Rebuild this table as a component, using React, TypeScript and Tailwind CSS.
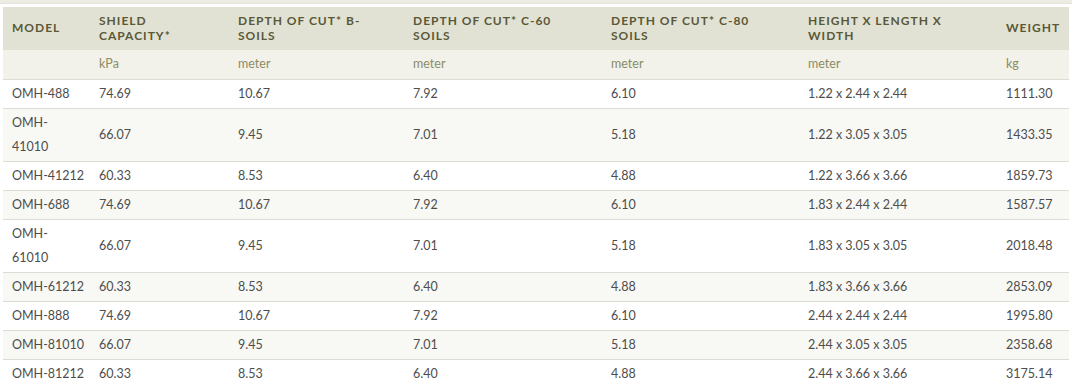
import React from "react";

const rows: { m: string[]; v: string[] }[] = [
  { m: ["OMH-488"], v: ["74.69", "10.67", "7.92", "6.10", "1.22 x 2.44 x 2.44", "1111.30"] },
  { m: ["OMH-", "41010"], v: ["66.07", "9.45", "7.01", "5.18", "1.22 x 3.05 x 3.05", "1433.35"] },
  { m: ["OMH-41212"], v: ["60.33", "8.53", "6.40", "4.88", "1.22 x 3.66 x 3.66", "1859.73"] },
  { m: ["OMH-688"], v: ["74.69", "10.67", "7.92", "6.10", "1.83 x 2.44 x 2.44", "1587.57"] },
  { m: ["OMH-", "61010"], v: ["66.07", "9.45", "7.01", "5.18", "1.83 x 3.05 x 3.05", "2018.48"] },
  { m: ["OMH-61212"], v: ["60.33", "8.53", "6.40", "4.88", "1.83 x 3.66 x 3.66", "2853.09"] },
  { m: ["OMH-888"], v: ["74.69", "10.67", "7.92", "6.10", "2.44 x 2.44 x 2.44", "1995.80"] },
  { m: ["OMH-81010"], v: ["66.07", "9.45", "7.01", "5.18", "2.44 x 3.05 x 3.05", "2358.68"] },
  { m: ["OMH-81212"], v: ["60.33", "8.53", "6.40", "4.88", "2.44 x 3.66 x 3.66", "3175.14"] },
];

const headers: string[][] = [
  ["MODEL"],
  ["SHIELD", "CAPACITY*"],
  ["DEPTH OF CUT* B-", "SOILS"],
  ["DEPTH OF CUT* C-60", "SOILS"],
  ["DEPTH OF CUT* C-80", "SOILS"],
  ["HEIGHT X LENGTH X", "WIDTH"],
  ["WEIGHT"],
];

const units = ["", "kPa", "meter", "meter", "meter", "meter", "kg"];

export default function App() {
  return (
    <div className="w-[1072px] h-[387px] overflow-hidden bg-white" style={{ fontFamily: "Lato, 'Liberation Sans', sans-serif" }}>
      <div className="h-[4px] bg-[#ececE5] border-b border-[#e4e4dc]" />
      <div className="h-[3px] bg-white" />
      <table className="ml-[3px] w-[1066px] table-fixed border-collapse">
        <colgroup>
          <col className="w-[87px]" />
          <col className="w-[139px]" />
          <col className="w-[175px]" />
          <col className="w-[198px]" />
          <col className="w-[197px]" />
          <col className="w-[198px]" />
          <col className="w-[72px]" />
        </colgroup>
        <thead>
          <tr className="h-[43px] bg-[#e2e2d4]">
            {headers.map((h, i) => (
              <th
                key={i}
                className="pl-[9px] pr-0 py-0 text-left align-middle text-[12px] font-bold leading-[14.5px] tracking-[1px] text-[#595938] whitespace-nowrap"
              >
                {h.map((l, j) => (
                  <div key={j}>{l}</div>
                ))}
              </th>
            ))}
          </tr>
          <tr className="h-[29px] bg-[#f2f2eb] border-b border-[#dcdcd3]">
            {units.map((u, i) => (
              <td key={i} className="pl-[9px] py-[2px] text-[12.5px] leading-[24px] text-[#8c8c64] align-middle">
                {u}
              </td>
            ))}
          </tr>
        </thead>
        <tbody>
          {rows.map((r, i) => (
            <tr key={i} className={(i % 2 === 1 ? "bg-[#f8f8f4]" : "bg-white") + " border-b border-[#dcdcd3]"}>
              <td className="pl-[9px] py-[2px] text-[12.5px] leading-[24px] text-[#4d4d4d] align-middle whitespace-nowrap">
                {r.m.map((l, j) => (
                  <div key={j}>{l}</div>
                ))}
              </td>
              {r.v.map((v, j) => (
                <td key={j} className="pl-[9px] py-[2px] text-[12.5px] leading-[24px] text-[#4d4d4d] align-middle whitespace-nowrap">
                  {v}
                </td>
              ))}
            </tr>
          ))}
        </tbody>
      </table>
    </div>
  );
}
